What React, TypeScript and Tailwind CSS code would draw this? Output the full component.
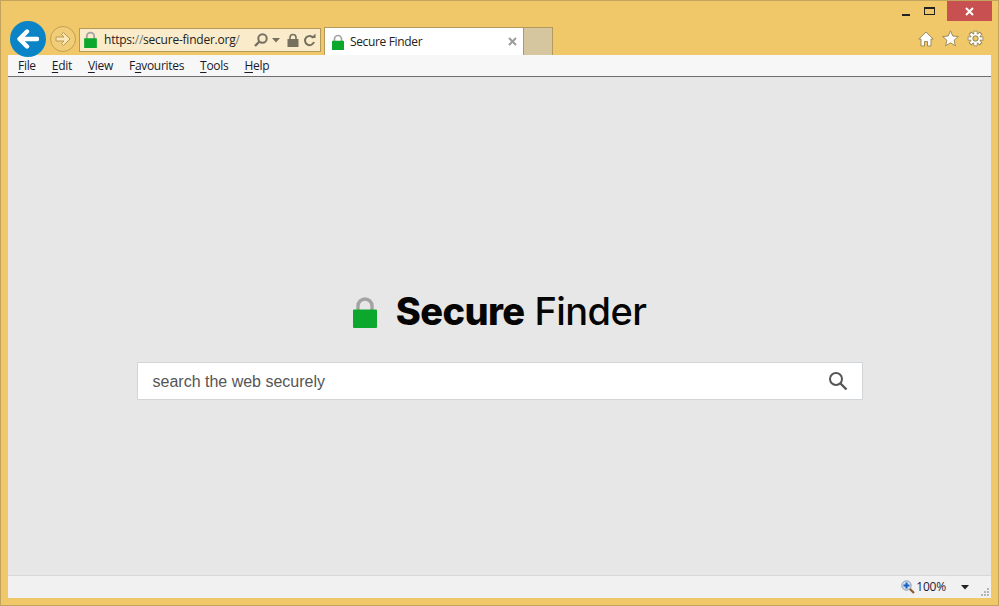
const UI = "font-['Open_Sans','Noto_Sans',sans-serif]";

function Padlock({ w, h, className = "" }: { w: number; h: number; className?: string }) {
  return (
    <svg width={w} height={h} viewBox="0 0 24 32" className={className}>
      <path d="M5 15V10a7 7 0 0 1 14 0V15" fill="none" stroke="#a3a3a3" strokeWidth="3.4" />
      <rect x="0" y="13.5" width="24" height="18.5" rx="1" fill="#0ca82e" />
    </svg>
  );
}

function MenuLabel({ first, rest, pre = "" }: { first: string; rest: string; pre?: string }) {
  return (
    <span className="text-[12px] leading-[16px] tracking-[-0.3px] text-[#1a1a2a]">
      {pre}
      <span className="underline underline-offset-2">{first}</span>
      {rest}
    </span>
  );
}

export default function App() {
  return (
    <div className={`${UI} w-[999px] h-[606px] flex flex-col bg-[#f0c869] border border-[#c2a45c] overflow-hidden`}>
      {/* title bar + tabs */}
      <div className="h-[54px] flex justify-between relative pl-[9px] pr-[6px]">
        <div className="flex items-end">
          <div className="w-[36px] h-[36px] rounded-full bg-[#0a84c6] flex items-center justify-center z-10 -mb-[2px] shrink-0">
            <svg width="22" height="20" viewBox="0 0 22 20">
              <path d="M10 2.5 2.5 10l7.5 7.5M3 10H20" fill="none" stroke="#fff" strokeWidth="4.4" strokeLinecap="round" strokeLinejoin="round" />
            </svg>
          </div>
          <div className="ml-[4px] mb-[3px] w-[26px] h-[26px] rounded-full border border-[#c2a053] bg-[#f2cd78] flex items-center justify-center shrink-0">
            <svg width="16" height="14" viewBox="0 0 16 14">
              <path d="M8.5.5 15 7l-6.5 6.5-2-2L9 9H1V5h8L6.5 2.5z" fill="#fbe8b6" stroke="#b89a55" strokeWidth="1" strokeLinejoin="round" />
            </svg>
          </div>
          <div className="ml-[3px] mb-[3px] w-[242px] h-[24px] bg-[#faeccb] border border-[#b39a5a] flex items-center shrink-0">
            <Padlock w={13} h={17} className="ml-[4px] -mt-[2px]" />
            <span className="ml-[7px] text-[12px] leading-[16px] tracking-[-0.23px] text-[#222] whitespace-nowrap">
              https:<span className="text-[#777]">//</span>secure-finder.org<span className="text-[#777]">/</span>
            </span>
            <svg width="16" height="16" viewBox="0 0 16 16" className="ml-[13px] shrink-0">
              <circle cx="9.5" cy="6.5" r="4.2" fill="none" stroke="#76705f" strokeWidth="2" />
              <path d="M6.5 9.5 2 14" stroke="#76705f" strokeWidth="2.4" />
            </svg>
            <svg width="8" height="5" viewBox="0 0 8 5" className="ml-[3px] shrink-0"><path d="M0 0h8L4 4.5z" fill="#76705f" /></svg>
            <svg width="12" height="14" viewBox="0 0 12 14" className="ml-[7px] shrink-0">
              <path d="M3 7V4.5a3 3 0 0 1 6 0V7" fill="none" stroke="#76705f" strokeWidth="1.6" />
              <rect x="0.5" y="6" width="11" height="8" fill="#76705f" />
            </svg>
            <svg width="13" height="14" viewBox="0 0 13 14" className="ml-[4px] shrink-0">
              <path d="M10.5 5A4.6 4.6 0 1 0 11 9" fill="none" stroke="#76705f" strokeWidth="2" />
              <path d="M8 5h4.5V0.5z" fill="#76705f" />
            </svg>
          </div>
          <div className="ml-[3px] w-[200px] h-[28px] bg-white border border-[#b39a5a] border-b-0 flex items-center shrink-0">
            <Padlock w={12} h={16} className="ml-[7px]" />
            <span className="ml-[6px] text-[12px] leading-[16px] tracking-[-0.35px] text-[#222]">Secure Finder</span>
            <svg width="9" height="9" viewBox="0 0 9 9" className="ml-auto mr-[6px]">
              <path d="M1 1l7 7M8 1 1 8" stroke="#9c9c9c" strokeWidth="2" />
            </svg>
          </div>
          <div className="w-[29px] h-[28px] bg-[#d6c6a0] border border-[#b39a5a] border-b-0 border-l-0 shrink-0" />
        </div>
        <div className="flex flex-col items-end">
          <div className="flex items-start h-[21px]">
            <span className="w-[8px] h-[2px] bg-[#222] mt-[13px] mr-[14px]" />
            <span className="w-[11px] h-[8px] border border-[#222] border-t-2 mt-[6px] mr-[12px]" />
            <div className="w-[45px] h-[20px] bg-[#c95050] flex items-center justify-center">
              <svg width="9" height="9" viewBox="0 0 9 9"><path d="M1 1l7 7M8 1 1 8" stroke="#fff" strokeWidth="2" /></svg>
            </div>
          </div>
          <div className="flex items-center gap-[8px] mt-[8px] mr-[8px]">
            <svg width="16" height="16" viewBox="0 0 16 16">
              <path d="M8 1 .8 8H3v7h3.5v-4.5h3V15H13V8h2.2z" fill="#fff" stroke="#9d8a5a" strokeWidth="1" strokeLinejoin="round" />
            </svg>
            <svg width="17" height="17" viewBox="0 0 17 17">
              <path d="M8.5.8l2.3 5.2 5.6.5-4.3 3.7 1.3 5.6-4.9-3-4.9 3 1.3-5.6L.6 6.5 6.2 6z" fill="#fff" stroke="#9d8a5a" strokeWidth="1" strokeLinejoin="round" />
            </svg>
            <svg width="17" height="17" viewBox="0 0 24 24">
              <path d="M12 1v22M1 12h22M4.2 4.2 19.8 19.8M19.8 4.2 4.2 19.8" stroke="#8d7c50" strokeWidth="5.4" />
              <circle cx="12" cy="12" r="7" fill="#8d7c50" />
              <path d="M12 2v20M2 12h20M5 5 19 19M19 5 5 19" stroke="#fff" strokeWidth="3.6" />
              <circle cx="12" cy="12" r="6.5" fill="#fff" />
              <circle cx="12" cy="12" r="3.8" fill="#f0c869" stroke="#8d7c50" strokeWidth="1.4" />
            </svg>
          </div>
        </div>
      </div>

      {/* page frame */}
      <div className="mx-[7px] mb-[7px] flex-1 flex flex-col min-h-0">
        <div className="h-[22px] bg-[#f7f7f7] border-b border-[#6e6e6e] flex items-center gap-[16px] pl-[10px] shrink-0">
          <MenuLabel first="F" rest="ile" />
          <MenuLabel first="E" rest="dit" />
          <MenuLabel first="V" rest="iew" />
          <MenuLabel pre="F" first="a" rest="vourites" />
          <MenuLabel first="T" rest="ools" />
          <MenuLabel first="H" rest="elp" />
        </div>

        <main className="flex-1 bg-[#e7e7e7] flex flex-col items-center pt-[216px] min-h-0">
          <div className="flex items-center h-[36px] font-['Inter',sans-serif] text-[38px] leading-[36px] text-[#050505] tracking-[-0.6px] whitespace-nowrap">
            <Padlock w={24} h={32} className="mt-[2px]" />
            <span className="ml-[19px] font-extrabold">Secure</span>
            <span className="ml-[10px] font-medium">Finder</span>
          </div>
          <div className="mt-[33px] w-[726px] h-[38px] bg-white border border-[#d3d6d8] flex items-center justify-between pl-[15px] pr-[14px]">
            <span className="font-['Liberation_Sans',sans-serif] text-[16px] text-[#555] pt-[1px]">search the web securely</span>
            <svg width="20" height="20" viewBox="0 0 20 20">
              <circle cx="8" cy="8" r="6" fill="none" stroke="#555" strokeWidth="2" />
              <path d="M12.5 12.5 18.5 18.5" stroke="#555" strokeWidth="2.4" />
            </svg>
          </div>
        </main>

        <div className="h-[23px] bg-[#f1f1f1] border-t border-[#d8d8d8] flex items-center justify-end shrink-0 relative">
          <svg width="14" height="14" viewBox="0 0 14 14" className="mr-[1px]">
            <path d="M8.5 8.5 13 13" stroke="#8a5a30" strokeWidth="2.2" />
            <circle cx="5.5" cy="5.5" r="4.7" fill="#cfe0f2" stroke="#8a9bb0" />
            <path d="M5.5 2.5v6M2.5 5.5h6" stroke="#1a5fc0" strokeWidth="2" />
          </svg>
          <span className="text-[12px] leading-[16px] tracking-[-0.2px] text-[#1a1a3a]">100%</span>
          <svg width="8" height="5" viewBox="0 0 8 5" className="ml-[15px] mr-[22px]"><path d="M0 0h8L4 4.5z" fill="#222" /></svg>
          <svg width="8" height="8" viewBox="0 0 8 8" className="absolute right-[2px] bottom-[2px]">
            <path d="M6 0h2v2H6zM3 3h2v2H3zM6 3h2v2H6zM0 6h2v2H0zM3 6h2v2H3zM6 6h2v2H6z" fill="#b5b5b5" />
          </svg>
        </div>
      </div>
    </div>
  );
}
